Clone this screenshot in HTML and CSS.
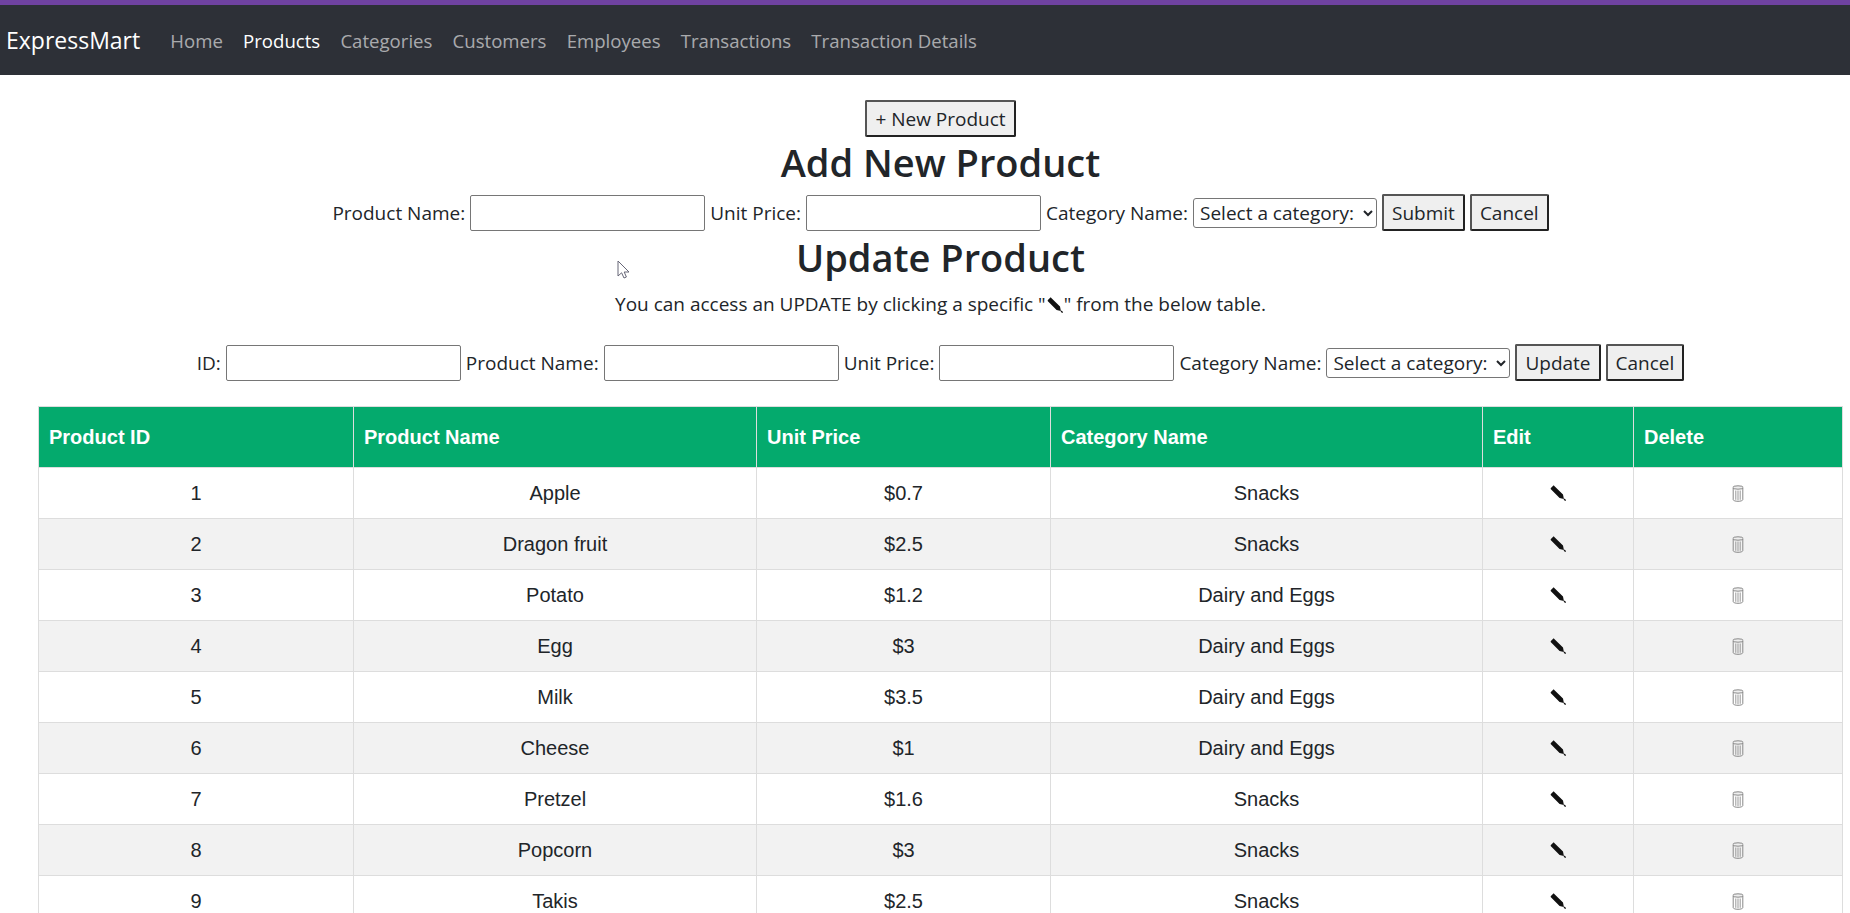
FILE: index.html
```html
<!DOCTYPE html>
<html lang="en">
<head>
    <meta charset="UTF-8">
    <meta name="viewport" content="width=device-width, initial-scale=1.0">
    <title>ExpressMart - Products</title>
    <link rel="stylesheet" href="styles.css">
</head>
<body>
    <svg width="0" height="0" class="icon-defs">
        <symbol id="pencil" viewBox="0 0 16 16">
            <path d="M.9 2.900 2.900 .9C3.300 .5 3.900 .5 4.300 .9L13 9.600 13.900 13.900 9.600 13 .9 4.300C.5 3.900 .5 3.300 .9 2.900Z" fill="#111"/>
            <path d="M14 14 15.600 15.600" stroke="#111" stroke-width="1.300"/>
        </symbol>
        <symbol id="trash" viewBox="0 0 12 17">
            <ellipse cx="6" cy="2.500" rx="5.200" ry="1.700" fill="#eee" stroke="#888" stroke-width="1"/>
            <path d="M1.200 3V14.600C1.200 15.600 3.400 16.300 6 16.300S10.800 15.600 10.800 14.600V3" fill="none" stroke="#888" stroke-width="1"/>
            <path d="M3.800 5.500V14.800M6 5.500V15.200M8.200 5.500V14.800" stroke="#999" stroke-width="1"/>
        </symbol>
    </svg>

    <div class="top-line"></div>
    <nav class="navbar">
        <a class="brand" href="#">ExpressMart</a>
        <a class="nav-link" href="#">Home</a>
        <a class="nav-link active" href="#">Products</a>
        <a class="nav-link" href="#">Categories</a>
        <a class="nav-link" href="#">Customers</a>
        <a class="nav-link" href="#">Employees</a>
        <a class="nav-link" href="#">Transactions</a>
        <a class="nav-link" href="#">Transaction Details</a>
    </nav>

    <main class="content">
        <button class="btn" type="button">+ New Product</button>
        <h2 class="add-title">Add New Product</h2>
        <form class="row-form add-form">
            <label for="addName">Product Name:</label>
            <input type="text" id="addName">
            <label for="addPrice">Unit Price:</label>
            <input type="text" id="addPrice">
            <label for="addCat">Category Name:</label>
            <select id="addCat"><option>Select a category:</option></select>
            <button class="btn" type="button">Submit</button>
            <button class="btn" type="button">Cancel</button>
        </form>

        <h2>Update Product</h2>
        <p class="hint">You can access an UPDATE by clicking a specific "<svg class="icon-pencil hint-icon"><use href="#pencil"/></svg>" from the below table.</p>
        <form class="row-form">
            <label for="updId">ID:</label>
            <input type="text" id="updId">
            <label for="updName">Product Name:</label>
            <input type="text" id="updName">
            <label for="updPrice">Unit Price:</label>
            <input type="text" id="updPrice">
            <label for="updCat">Category Name:</label>
            <select id="updCat"><option>Select a category:</option></select>
            <button class="btn" type="button">Update</button>
            <button class="btn" type="button">Cancel</button>
        </form>

        <table class="products">
            <colgroup>
                <col class="col-id"><col class="col-name"><col class="col-price"><col class="col-cat"><col class="col-edit"><col class="col-del">
            </colgroup>
            <thead>
                <tr>
                    <th>Product ID</th>
                    <th>Product Name</th>
                    <th>Unit Price</th>
                    <th>Category Name</th>
                    <th>Edit</th>
                    <th>Delete</th>
                </tr>
            </thead>
            <tbody>
                <tr><td>1</td><td>Apple</td><td>$0.7</td><td>Snacks</td><td><svg class="icon-pencil"><use href="#pencil"/></svg></td><td><svg class="icon-trash"><use href="#trash"/></svg></td></tr>
                <tr><td>2</td><td>Dragon fruit</td><td>$2.5</td><td>Snacks</td><td><svg class="icon-pencil"><use href="#pencil"/></svg></td><td><svg class="icon-trash"><use href="#trash"/></svg></td></tr>
                <tr><td>3</td><td>Potato</td><td>$1.2</td><td>Dairy and Eggs</td><td><svg class="icon-pencil"><use href="#pencil"/></svg></td><td><svg class="icon-trash"><use href="#trash"/></svg></td></tr>
                <tr><td>4</td><td>Egg</td><td>$3</td><td>Dairy and Eggs</td><td><svg class="icon-pencil"><use href="#pencil"/></svg></td><td><svg class="icon-trash"><use href="#trash"/></svg></td></tr>
                <tr><td>5</td><td>Milk</td><td>$3.5</td><td>Dairy and Eggs</td><td><svg class="icon-pencil"><use href="#pencil"/></svg></td><td><svg class="icon-trash"><use href="#trash"/></svg></td></tr>
                <tr><td>6</td><td>Cheese</td><td>$1</td><td>Dairy and Eggs</td><td><svg class="icon-pencil"><use href="#pencil"/></svg></td><td><svg class="icon-trash"><use href="#trash"/></svg></td></tr>
                <tr><td>7</td><td>Pretzel</td><td>$1.6</td><td>Snacks</td><td><svg class="icon-pencil"><use href="#pencil"/></svg></td><td><svg class="icon-trash"><use href="#trash"/></svg></td></tr>
                <tr><td>8</td><td>Popcorn</td><td>$3</td><td>Snacks</td><td><svg class="icon-pencil"><use href="#pencil"/></svg></td><td><svg class="icon-trash"><use href="#trash"/></svg></td></tr>
                <tr><td>9</td><td>Takis</td><td>$2.5</td><td>Snacks</td><td><svg class="icon-pencil"><use href="#pencil"/></svg></td><td><svg class="icon-trash"><use href="#trash"/></svg></td></tr>
            </tbody>
        </table>
    </main>

    <svg class="cursor" width="14" height="20" viewBox="0 0 14 20">
        <path d="M1 1V16L4.600 12.800 7 18 9.400 17 7.200 12H12Z" fill="#fff" stroke="#667" stroke-width="1"/>
    </svg>
</body>
</html>
```

FILE: styles.css
```css
html, body {
    overflow: hidden;
}

body {
    margin: 0;
    font-family: "Open Sans", "Noto Sans", sans-serif;
    font-size: 20px;
    color: #212529;
    background-color: #fff;
    height: 913px;
    position: relative;
}

.icon-defs {
    position: absolute;
}

.top-line {
    height: 5px;
    background-color: #6f42a1;
}

.navbar {
    display: flex;
    align-items: center;
    height: 70px;
    background-color: #2d3037;
    padding-left: 6px;
}

.navbar a {
    text-decoration: none;
}

.brand {
    color: #fff;
    font-size: 23px;
    margin-right: 20px;
}

.nav-link {
    color: rgba(255, 255, 255, 0.6);
    font-size: 18.6px;
    margin: 0 10.1px;
}

.nav-link.active {
    color: #fff;
}

/* the page is wider than the window, so everything centers a bit right */
.content {
    width: 1881px;
    text-align: center;
    padding-top: 25px;
}

h2 {
    font-size: 38px;
    font-weight: 600;
    line-height: 48px;
    margin: 0;
    color: #212529;
}

.add-title {
    margin: 1px 0 8px;
}

.btn {
    font-family: inherit;
    font-size: 19px;
    height: 37px;
    padding: 0 8px;
    background-color: #efefef;
    color: #212529;
    border: 2px solid;
    border-color: #555 #222 #222 #555;
    border-radius: 2px;
}

.row-form {
    display: flex;
    justify-content: center;
    align-items: center;
    gap: 5px;
    font-size: 19px;
}

.add-form {
    margin-bottom: 2px;
}

.row-form input {
    width: 235px;
    height: 36px;
    box-sizing: border-box;
    border: 1px solid #767676;
    border-radius: 2px;
    background-color: #fff;
    padding: 0;
}

.row-form select {
    font-family: inherit;
    font-size: 19px;
    height: 30px;
    width: 184px;
    padding-left: 2px;
    background-color: #fff;
    color: #212529;
    border: 1px solid #767676;
    border-radius: 3px;
}

.hint {
    font-size: 19px;
    margin: 10px 0 26px;
    line-height: 27px;
}

.icon-pencil {
    width: 16px;
    height: 16px;
    vertical-align: -1px;
}

.hint-icon {
    vertical-align: -2px;
    margin: 0 1px;
}

.icon-trash {
    width: 12px;
    height: 17px;
    vertical-align: -2px;
}

.products {
    table-layout: fixed;
    border-collapse: collapse;
    width: 1804px;
    margin: 25px 0 0 38px;
    font-family: "Liberation Sans", Arial, sans-serif;
    font-size: 20px;
}

.col-id { width: 315px; }
.col-name { width: 403px; }
.col-price { width: 294px; }
.col-cat { width: 432px; }
.col-edit { width: 151px; }
.col-del { width: 209px; }

.products th,
.products td {
    border: 1px solid #ddd;
}

.products th {
    background-color: #04aa6d;
    color: #fff;
    text-align: left;
    height: 60px;
    padding: 0 10px;
    font-weight: bold;
}

.products td {
    text-align: center;
    height: 50px;
    padding: 0 10px;
}

.products tbody tr:nth-child(even) {
    background-color: #f2f2f2;
}

.cursor {
    position: absolute;
    left: 617px;
    top: 260px;
}
```
